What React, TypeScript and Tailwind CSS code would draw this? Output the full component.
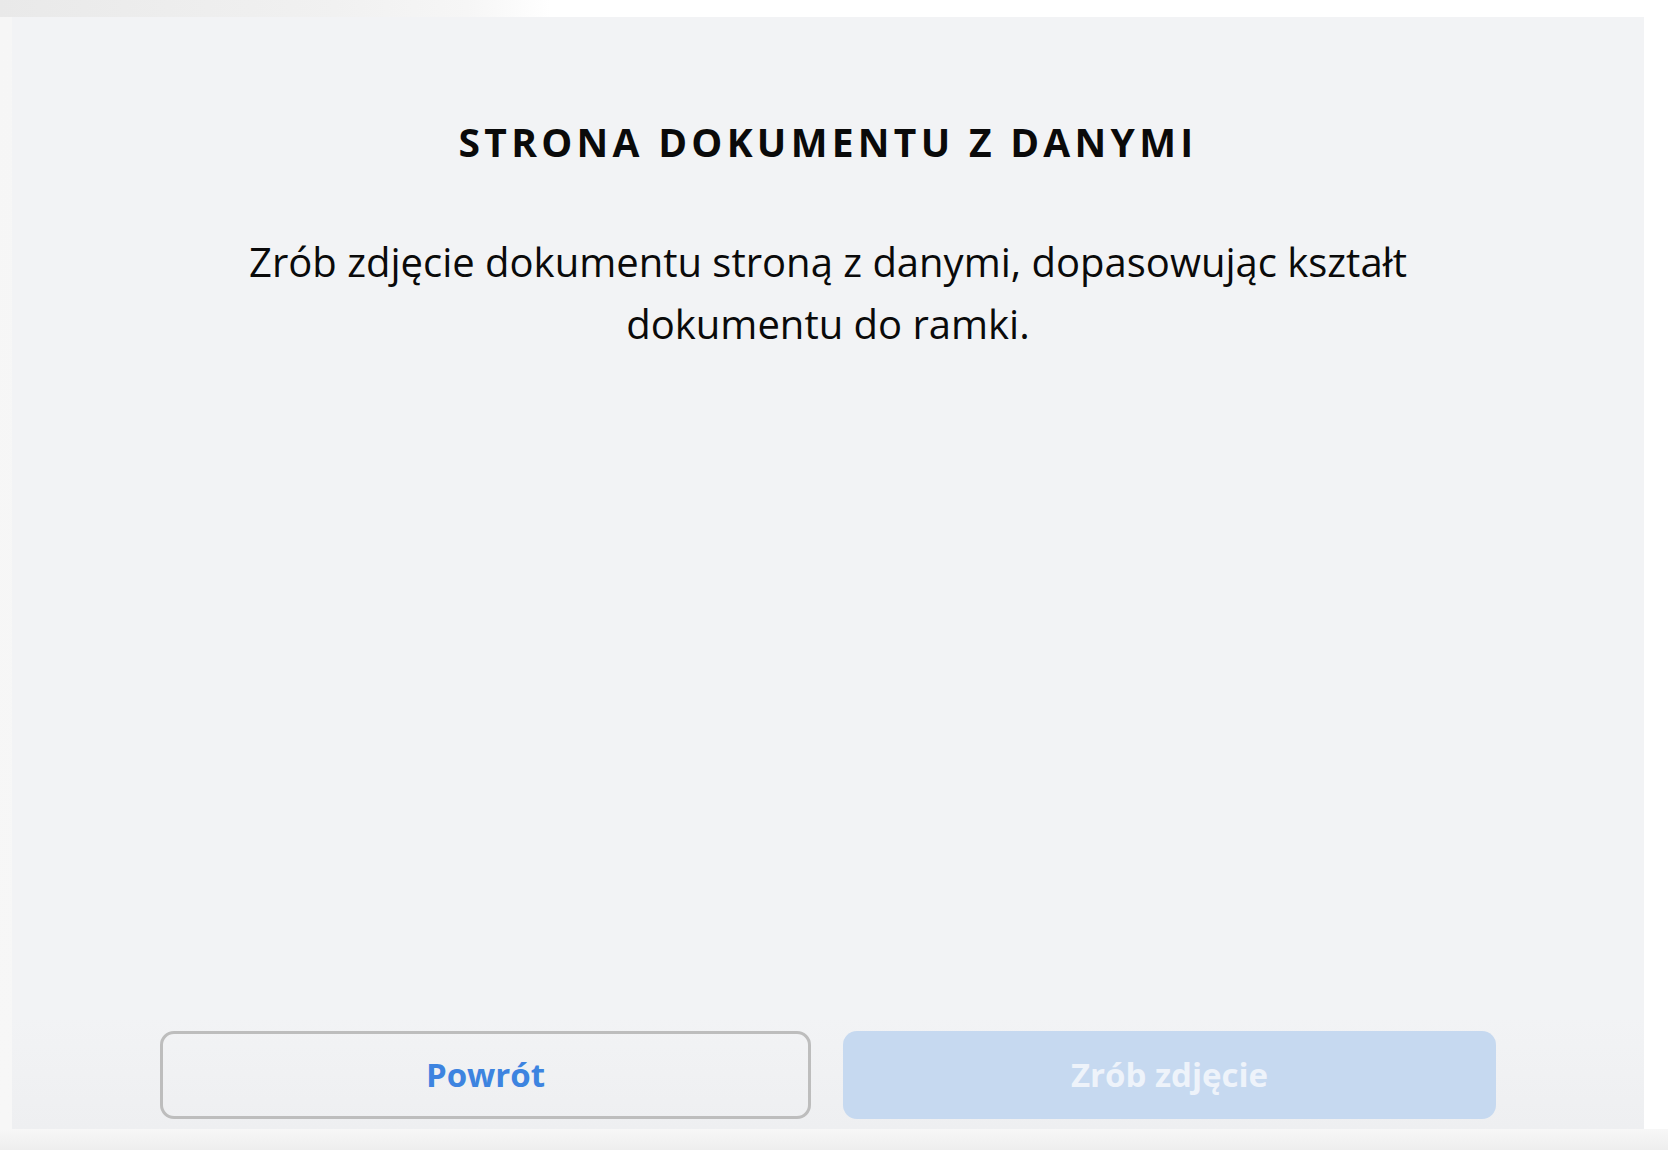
export default function App() {
  return (
    <div className="relative h-[1150px] w-full overflow-hidden bg-white font-['Open_Sans',sans-serif]">
      <div className="h-[17px] w-full bg-[linear-gradient(to_right,#e9e9e9_0%,#f1f1f1_20%,#f6f6f6_28%,#ffffff_33%)]" />
      <div className="flex h-[1112px]">
        <div className="w-[12px] bg-[linear-gradient(to_bottom,#f6f6f6,#f7f7f7)]" />
        <main className="flex w-[1632px] flex-col items-center bg-[linear-gradient(to_bottom,#f2f3f5_0%,#f2f3f5_90%,#eeeff1_100%)] px-[148px] pb-[10px]">
          <h1 className="mt-[100px] text-[39px] font-bold leading-[50px] tracking-[0.11em] text-[#0a0a0a]">
            STRONA DOKUMENTU Z DANYMI
          </h1>
          <p className="mt-[64px] max-w-[1240px] text-center text-[40px] leading-[62px] text-[#0a0a0a]">
            Zrób zdjęcie dokumentu stroną z danymi, dopasowując kształt dokumentu do ramki.
          </p>
          <div className="flex-1" />
          <div className="flex w-full justify-between">
            <button
              type="button"
              className="h-[88px] w-[651px] rounded-[14px] border-[3px] border-[#bdbdbd] bg-transparent text-[33px] font-bold text-[#3d84e0]"
            >
              Powrót
            </button>
            <button
              type="button"
              disabled
              className="h-[88px] w-[653px] rounded-[14px] bg-[#c6d9f0] text-[33px] font-bold text-[#eef3fa]"
            >
              Zrób zdjęcie
            </button>
          </div>
        </main>
        <div className="flex-1 bg-white" />
      </div>
      <div className="h-[21px] w-full bg-[linear-gradient(to_bottom,#f7f7f7,#eeeeee)]" />
    </div>
  );
}
